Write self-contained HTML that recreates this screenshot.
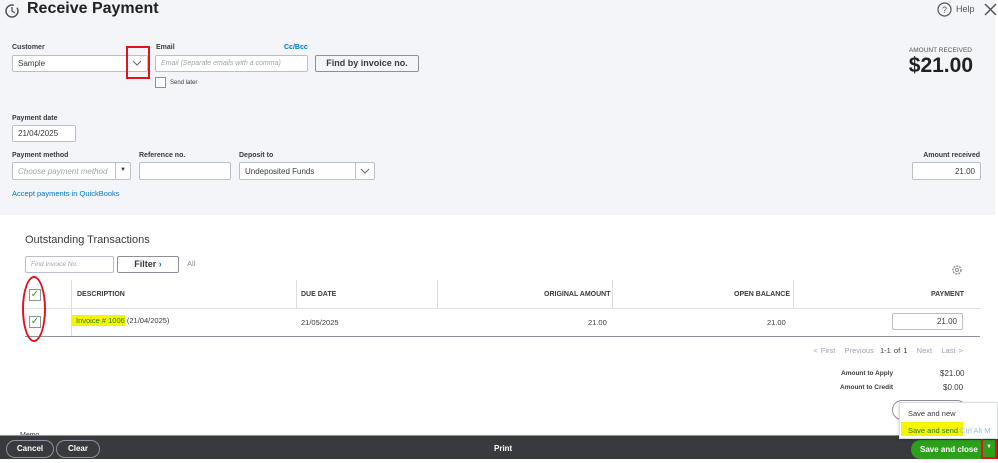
<!DOCTYPE html>
<html><head><meta charset="utf-8"><style>
*{margin:0;padding:0;box-sizing:border-box}
body{width:998px;height:463px;overflow:hidden;background:#fff;font-family:"Liberation Sans",Arial,sans-serif;color:#393a3d;position:relative}
.a{position:absolute}
.top{left:0;top:0;width:995px;height:215px;background:#f4f5f8}
.lbl{font-size:7px;font-weight:bold;color:#393a3d}
.inp{background:#fff;border:1px solid #babec5;border-radius:2px;font-size:8px;padding-left:5px;display:flex;align-items:center}
.ph{color:#a0a3a8;font-style:italic}
.th{font-size:7px;font-weight:bold;top:291px}
.td{font-size:7.5px;top:318px}
.vl{width:1px;background:#dcdde0}
</style></head><body>
<div class="a top"></div>
<svg class="a" style="left:4px;top:3px" width="16" height="16" viewBox="0 0 16 16"><circle cx="8" cy="8" r="6" fill="none" stroke="#555" stroke-width="1.5" stroke-dasharray="30 4"/><path d="M8 4v4l3 2" stroke="#555" stroke-width="1.3" fill="none"/></svg>
<div class="a" style="left:27px;top:0px;font-size:16px;font-weight:bold;color:#222">Receive Payment</div>
<svg class="a" style="left:937px;top:2px" width="15" height="15"><circle cx="7.5" cy="7.5" r="6.5" fill="none" stroke="#555" stroke-width="1.2"/><text x="7.5" y="11" font-size="9" text-anchor="middle" fill="#555" font-family="Liberation Sans">?</text></svg>
<div class="a" style="left:956px;top:4px;font-size:9px;color:#555">Help</div>
<svg class="a" style="left:984px;top:3px" width="13" height="13"><path d="M1 1L12 12M12 1L1 12" stroke="#555" stroke-width="1.5"/></svg>

<div class="a lbl" style="left:12px;top:44px">Customer</div>
<div class="a inp" style="left:12px;top:55px;width:136px;height:17px">Sample</div>
<svg class="a" style="left:132px;top:59px" width="10" height="8"><path d="M1 2l4 4 4-4" stroke="#666" fill="none"/></svg>
<div class="a" style="left:126px;top:46px;width:24px;height:33px;border:2.5px solid #e0141e"></div>
<div class="a lbl" style="left:156px;top:44px">Email</div>
<div class="a" style="left:284px;top:44px;font-size:7px;color:#0077c5;font-weight:bold">Cc/Bcc</div>
<div class="a inp ph" style="left:155px;top:55px;width:153px;height:17px;font-size:7px">Email (Separate emails with a comma)</div>
<div class="a" style="left:315px;top:55px;width:104px;height:17px;border:1px solid #8d9096;border-radius:2px;background:#f4f5f8;font-size:9px;font-weight:bold;text-align:center;line-height:15px">Find by invoice no.</div>
<div class="a" style="left:155px;top:77px;width:11px;height:11px;border:1px solid #8d9096;background:#fff"></div>
<div class="a" style="left:170px;top:80px;font-size:6px">Send later</div>
<div class="a" style="right:26px;top:47px;font-size:6.5px;color:#555">AMOUNT RECEIVED</div>
<div class="a" style="right:25px;top:54px;font-size:21px;font-weight:bold;color:#222">$21.00</div>

<div class="a lbl" style="left:12px;top:115px">Payment date</div>
<div class="a inp" style="left:12px;top:125px;width:64px;height:17px">21/04/2025</div>
<div class="a lbl" style="left:12px;top:152px">Payment method</div>
<div class="a inp ph" style="left:12px;top:162px;width:119px;height:18px">Choose payment method</div>
<div class="a vl" style="left:115px;top:163px;height:16px;background:#babec5"></div>
<div class="a" style="left:120px;top:167px;font-size:6px">▼</div>
<div class="a lbl" style="left:139px;top:152px">Reference no.</div>
<div class="a inp" style="left:139px;top:162px;width:92px;height:18px"></div>
<div class="a lbl" style="left:239px;top:152px">Deposit to</div>
<div class="a inp" style="left:239px;top:162px;width:136px;height:18px">Undeposited Funds</div>
<div class="a vl" style="left:355px;top:163px;height:16px;background:#babec5"></div>
<svg class="a" style="left:360px;top:167px" width="10" height="8"><path d="M1 2l4 4 4-4" stroke="#666" fill="none"/></svg>
<div class="a" style="left:12px;top:189px;font-size:7.5px;color:#0077c5">Accept payments in QuickBooks</div>
<div class="a lbl" style="right:18px;top:152px">Amount received</div>
<div class="a inp" style="left:912px;top:162px;width:69px;height:18px;justify-content:flex-end;padding-right:5px">21.00</div>

<div class="a" style="left:25px;top:234px;font-size:11px;color:#393a3d">Outstanding Transactions</div>
<div class="a inp ph" style="left:25px;top:256px;width:89px;height:17px;font-size:6.5px">Find Invoice No.</div>
<div class="a" style="left:117px;top:256px;width:62px;height:17px;border:1px solid #8d9096;border-radius:2px;font-size:9px;font-weight:bold;text-align:center;line-height:15px">Filter <span style="color:#0077c5">›</span></div>
<div class="a" style="left:187px;top:259px;font-size:7.5px;color:#8d9096">All</div>
<svg class="a" style="left:951px;top:264px" width="12" height="12"><circle cx="6" cy="6" r="4" fill="none" stroke="#8d9096" stroke-width="1.5" stroke-dasharray="2 1"/><circle cx="6" cy="6" r="1.5" fill="none" stroke="#8d9096"/></svg>

<div class="a" style="left:25px;top:308px;width:955px;height:1px;background:#dcdde0"></div>
<div class="a" style="left:25px;top:336px;width:955px;height:1px;background:#8d9096"></div>
<div class="a vl" style="left:71px;top:280px;height:56px"></div>
<div class="a vl" style="left:296px;top:280px;height:28px"></div>
<div class="a vl" style="left:437px;top:280px;height:28px"></div>
<div class="a vl" style="left:612px;top:280px;height:28px"></div>
<div class="a vl" style="left:793px;top:280px;height:28px"></div>
<div class="a" style="left:29px;top:289px;width:12px;height:12px;border:1px solid #8d9096;background:#fff;color:#2ca01c;font-size:10px;line-height:10px;text-align:center">✓</div>
<div class="a" style="left:29px;top:316px;width:12px;height:12px;border:1px solid #8d9096;background:#fff;color:#2ca01c;font-size:10px;line-height:10px;text-align:center">✓</div>
<div class="a" style="left:22px;top:276px;width:24px;height:66px;border:2.5px solid #e0141e;border-radius:50%"></div>
<div class="a th" style="left:77px">DESCRIPTION</div>
<div class="a th" style="left:301px">DUE DATE</div>
<div class="a th" style="left:544px">ORIGINAL AMOUNT</div>
<div class="a th" style="left:734px">OPEN BALANCE</div>
<div class="a th" style="left:931px">PAYMENT</div>
<div class="a td" style="left:72px;top:316px"><span style="background:#f5f500;color:#2a7a1e;padding:1px 0 1px 4px">Invoice # 1006</span> (21/04/2025)</div>
<div class="a td" style="left:301px">21/05/2025</div>
<div class="a td" style="left:588px">21.00</div>
<div class="a td" style="left:767px">21.00</div>
<div class="a inp" style="left:892px;top:313px;width:71px;height:17px;justify-content:flex-end;padding-right:5px">21.00</div>

<div class="a" style="right:35px;top:346px;font-size:7.5px;color:#a0a3a8;word-spacing:1px">&lt; First &nbsp; Previous &nbsp;<span style="color:#393a3d">1-1 of 1</span> &nbsp; Next &nbsp; Last &gt;</div>
<div class="a" style="left:841px;top:370px;font-size:6.5px;font-weight:bold">Amount to Apply</div>
<div class="a" style="left:940px;top:369px;font-size:8px">$21.00</div>
<div class="a" style="left:840px;top:384px;font-size:6.5px;font-weight:bold">Amount to Credit</div>
<div class="a" style="left:943px;top:383px;font-size:8px">$0.00</div>
<div class="a" style="left:892px;top:400px;width:75px;height:20px;border:1px solid #8d9096;border-radius:10px"></div>
<div class="a" style="left:20px;top:432px;font-size:7px">Memo</div>

<div class="a" style="left:0;top:435px;width:998px;height:24px;background:#393a3d;border-top:1px solid #8d9096"></div>
<div class="a" style="left:6px;top:440px;width:48px;height:18px;border:1px solid #8d9096;border-radius:9px;color:#fff;font-size:8px;font-weight:bold;text-align:center;line-height:16px">Cancel</div>
<div class="a" style="left:56px;top:440px;width:44px;height:18px;border:1px solid #8d9096;border-radius:9px;color:#fff;font-size:8px;font-weight:bold;text-align:center;line-height:16px">Clear</div>
<div class="a" style="left:494px;top:444px;color:#fff;font-size:8px;font-weight:bold">Print</div>
<div class="a" style="left:911px;top:440px;width:86px;height:19px;background:#2ca01c;border-radius:10px 0 0 10px;color:#fff;font-size:8px;font-weight:bold;line-height:19px;padding-left:9px">Save and close</div>
<div class="a" style="left:981px;top:437px;width:16px;height:22px;border:2.5px solid #e0141e;color:#fff;font-size:6px;text-align:center;line-height:17px">▼</div>
<div class="a" style="left:899px;top:402px;width:99px;height:37px;background:#fff;border:1px solid #dcdde0;box-shadow:0 1px 3px rgba(0,0,0,.2)"></div>
<div class="a" style="left:908px;top:409px;font-size:7.5px">Save and new</div>
<div class="a" style="left:901px;top:422px;width:62px;height:14px;background:#f5f500"></div>
<div class="a" style="left:908px;top:426px;font-size:7.5px;color:#2a7a1e">Save and send <span style="color:#a0c0e0">Ctrl Alt M</span></div>
</body></html>
